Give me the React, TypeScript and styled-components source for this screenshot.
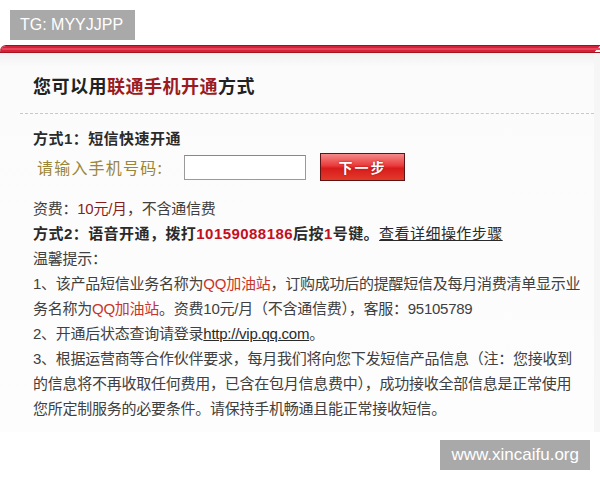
import styled, { createGlobalStyle } from "styled-components";

const GlobalStyle = createGlobalStyle`
  html, body {
    margin: 0;
    padding: 0;
    background: #fff;
  }
  body {
    width: 600px;
    height: 480px;
    overflow: hidden;
    font-family: "Liberation Sans", "Noto Sans CJK SC", sans-serif;
  }
`;

export default function App() {
  return (
    <Page>
      <GlobalStyle />
      <Badge>TG: MYYJJPP</Badge>
      <Panel>
        <Header>
          <Title>
            您可以用<Mark>联通手机开通</Mark>方式
          </Title>
        </Header>
        <Content>
          <Line $bold>方式1：短信快速开通</Line>
          <FormRow>
            <Label>请输入手机号码:</Label>
            <PhoneInput type="text" />
            <NextButton>下一步</NextButton>
          </FormRow>
          <Text>
            <Line>
              资费：<Dark>10元/月</Dark>，不含通信费
            </Line>
            <Line $bold>
              方式2：语音开通，拨打<Red>10159088186</Red>后按<Red>1</Red>号键。
              <Link>查看详细操作步骤</Link>
            </Line>
            <Line>温馨提示：</Line>
            <Line>
              1、该产品短信业务名称为<Red $light>QQ加油站</Red>，订购成功后的提醒短信及每月消费清单显示业
            </Line>
            <Line>
              务名称为<Red $light>QQ加油站</Red>。资费10元/月（不含通信费），客服：95105789
            </Line>
            <Line>
              2、开通后状态查询请登录<Link>http://vip.qq.com</Link>。
            </Line>
            <Line>3、根据运营商等合作伙伴要求，每月我们将向您下发短信产品信息（注：您接收到</Line>
            <Line>的信息将不再收取任何费用，已含在包月信息费中），成功接收全部信息是正常使用</Line>
            <Line>您所定制服务的必要条件。请保持手机畅通且能正常接收短信。</Line>
          </Text>
        </Content>
      </Panel>
      <Footer>
        <Watermark>www.xincaifu.org</Watermark>
      </Footer>
    </Page>
  );
}

const Page = styled.div`
  width: 600px;
  height: 480px;
  padding-top: 10px;
  box-sizing: border-box;
`;

const Badge = styled.div`
  display: inline-block;
  margin-left: 10px;
  height: 30px;
  width: 125px;
  box-sizing: border-box;
  padding-left: 10px;
  line-height: 30px;
  background: #a9a9a9;
  color: #fff;
  font-size: 16px;
  font-family: "Liberation Sans", sans-serif;
`;

const Panel = styled.div`
  margin-top: 6px;
  width: 600px;
  height: 386px;
  box-sizing: border-box;
  border-top: 7px solid #d2233a;
  border-right: 6px solid #f6f6f6;
  border-top-left-radius: 6px;
  background: linear-gradient(#f1f1f1 0px, #fbfbfb 14px, #fdfdfd 100%);
  box-shadow: 0 -1px 0 #a0101f;
  position: relative;
  &::before {
    content: "";
    position: absolute;
    left: 2px;
    right: -6px;
    top: -5px;
    height: 2px;
    background: #e8455a;
  }
  &::after {
    content: "";
    position: absolute;
    left: 0;
    right: -6px;
    top: -1px;
    height: 1px;
    background: #a8121f;
  }
`;

const Header = styled.div`
  margin-left: 20px;
  padding: 20px 0 16px 13px;
  border-bottom: 1px dashed #c8c8c8;
`;

const Title = styled.h2`
  margin: 0;
  font-size: 18px;
  line-height: 24px;
  letter-spacing: 0.5px;
  font-weight: bold;
  color: #222;
  font-family: "Noto Sans CJK SC", sans-serif;
`;

const Mark = styled.span`
  color: #9c1a22;
`;

const Content = styled.div`
  padding: 12px 0 0 33px;
  color: #3a3a3a;
  font-size: 15px;
`;

const Line = styled.div<{ $bold?: boolean }>`
  line-height: 25px;
  white-space: nowrap;
  font-weight: ${(p) => (p.$bold ? "bold" : "normal")};
  letter-spacing: ${(p) => (p.$bold ? "0.45px" : "-0.25px")};
  color: ${(p) => (p.$bold ? "#2a2a2a" : "#404040")};
`;

const FormRow = styled.div`
  display: flex;
  align-items: center;
  height: 30px;
  margin-top: 1px;
  padding-left: 4px;
`;

const Label = styled.span`
  width: 147px;
  font-size: 16px;
  letter-spacing: 1.2px;
  color: #9a8636;
  font-family: "Noto Sans CJK SC", sans-serif;
`;

const PhoneInput = styled.input`
  width: 122px;
  height: 25px;
  box-sizing: border-box;
  border: 1px solid #9a9a9a;
  border-top-color: #888;
  background: #fff;
  padding: 0 4px;
  margin: 0;
`;

const NextButton = styled.button`
  margin-left: 14px;
  width: 85px;
  height: 28px;
  padding: 0;
  border: 1px solid #5c1414;
  background: linear-gradient(#f58a8a 0%, #ea3a3a 45%, #d81c1c 55%, #e23a2a 100%);
  color: #fff;
  font-weight: bold;
  font-size: 14px;
  font-family: "Noto Sans CJK SC", sans-serif;
  letter-spacing: 2px;
  text-shadow: 0 0 2px #a01010;
  cursor: pointer;
`;

const Text = styled.div`
  margin-top: 14px;
`;

const Dark = styled.span`
  color: #8a1c1c;
`;

const Red = styled.span<{ $light?: boolean }>`
  color: ${(p) => (p.$light ? "#c8342a" : "#c40f1f")};
`;

const Link = styled.span`
  text-decoration: underline;
  font-weight: normal;
  color: #2a2a2a;
`;

const Footer = styled.div`
  display: flex;
  justify-content: flex-end;
  padding-right: 10px;
  margin-top: 8px;
`;

const Watermark = styled.div`
  height: 30px;
  line-height: 30px;
  padding: 0 11px;
  background: #a9a9a9;
  color: #fff;
  font-size: 17px;
  font-family: "Liberation Sans", sans-serif;
`;
